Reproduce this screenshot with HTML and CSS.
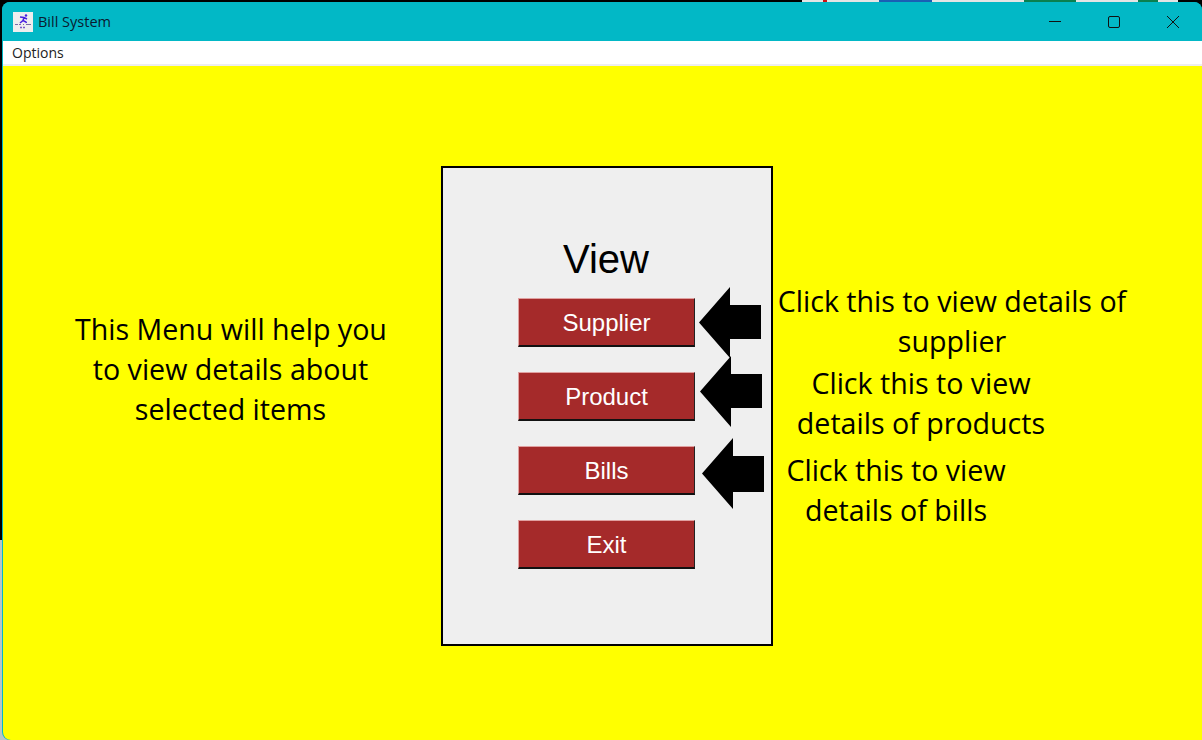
FILE: index.html
```html
<!DOCTYPE html>
<html lang="en">
    <head>
        <meta charset="UTF-8">
        <meta name="viewport" content="width=device-width, initial-scale=1.0">
        <title>Bill System</title>
        <link rel="stylesheet" href="styles.css">
    </head>
    <body>
        <div class="behind">
            <span class="behind-light w21"></span>
            <span class="behind-red w4"></span>
            <span class="behind-light w52"></span>
            <span class="behind-blue w53"></span>
            <span class="behind-light w92"></span>
            <span class="behind-green w52"></span>
            <span class="behind-light w62"></span>
            <span class="behind-green w20"></span>
            <span class="behind-light w20"></span>
        </div>
        <div class="window">
            <div class="titlebar">
                <svg class="app-icon" width="20" height="20" viewBox="0 0 20 20">
                    <rect width="20" height="20" fill="#eeeeee"/>
                    <circle cx="13" cy="3.5" r="1.2" fill="#4a20e0"/>
                    <path d="M7 5l4 .5 3 1.5M11 5.500l-1 3-3 2.500M10 8.500l3 1.500 .5 1" stroke="#4a20e0" stroke-width="1.500" fill="none"/>
                    <path d="M2 12.500h3M6 12.500h2M10 12.500h1M13 12.500h5" stroke="#7a6aa8" fill="none"/>
                    <path d="M7 15.500h6" stroke="#7a5ac8" stroke-width="1.500" stroke-dasharray="2 1" fill="none"/>
                </svg>
                <span class="app-name">Bill System</span>
                <div class="controls">
                    <button class="control">
                        <svg width="12" height="12" viewBox="0 0 12 12"><path d="M0 5.5h12" stroke="#111" fill="none"/></svg>
                    </button>
                    <button class="control">
                        <svg width="12" height="12" viewBox="0 0 12 12"><rect x="0.5" y="0.5" width="11" height="11" rx="1.5" stroke="#111" fill="none"/></svg>
                    </button>
                    <button class="control">
                        <svg width="12" height="12" viewBox="0 0 12 12"><path d="M0 0l12 12M12 0L0 12" stroke="#111" fill="none"/></svg>
                    </button>
                </div>
            </div>
            <div class="menubar"><a href="#">Options</a></div>
            <div class="canvas">
                <p class="note note-left">This Menu will help you<br>to view details about<br>selected items</p>

                <div class="panel">
                    <h2>View</h2>
                    <button class="menu-btn">Supplier</button>
                    <button class="menu-btn">Product</button>
                    <button class="menu-btn">Bills</button>
                    <button class="menu-btn">Exit</button>
                </div>

                <svg class="arrow arrow-supplier" width="62" height="71" viewBox="0 0 62 71"><path d="M31 0L0 35.5 31 71V52h31V18H31z"/></svg>
                <svg class="arrow arrow-product" width="62" height="71" viewBox="0 0 62 71"><path d="M31 0L0 35.5 31 71V52h31V18H31z"/></svg>
                <svg class="arrow arrow-bills" width="62" height="71" viewBox="0 0 62 71"><path d="M31 0L0 35.5 31 71V54h31V18H31z"/></svg>

                <p class="note note-supplier">Click this to view details of<br>supplier</p>
                <p class="note note-product">Click this to view<br>details of products</p>
                <p class="note note-bills">Click this to view<br>details of bills</p>
            </div>
        </div>
    </body>
</html>
```

FILE: styles.css
```css
* {
    box-sizing: border-box;
}

html, body {
    height: 100%;
}

body {
    margin: 0;
    overflow: hidden;
    background: linear-gradient(#000 540px, #b9c4c8 540px);
    font-family: "Open Sans", "Noto Sans", sans-serif;
}

.behind {
    display: flex;
    height: 2px;
    padding-left: 802px;
}

.w4 { width: 4px; }
.w20 { width: 20px; }
.w21 { width: 21px; }
.w52 { width: 52px; }
.w53 { width: 53px; }
.w62 { width: 62px; }
.w92 { width: 92px; }

.behind-light { background-color: #e4e4e4; }
.behind-red { background-color: #d01010; }
.behind-blue { background-color: #1a5fb4; }
.behind-green { background-color: #0a8050; }

.window {
    height: 738px;
    margin-left: 2px;
    display: flex;
    flex-direction: column;
    border-radius: 8px 8px 0 8px;
    overflow: hidden;
    background-color: #02b8c6;
}

.titlebar {
    height: 39px;
    flex: none;
    display: flex;
    align-items: center;
    padding-left: 11px;
    background-color: #02b8c6;
}

.app-icon {
    margin-right: 5px;
}

.app-name {
    font-size: 14.5px;
    color: #0a1a30;
}

.controls {
    margin-left: auto;
    display: flex;
}

.control {
    width: 59px;
    height: 39px;
    padding: 0;
    border: none;
    background: none;
    display: flex;
    align-items: center;
    justify-content: center;
}

.menubar {
    height: 25px;
    flex: none;
    margin-left: 1px;
    padding: 3px 0 0 9px;
    background-color: #fff;
    border-bottom: 2px solid #eeeeee;
    font-size: 14px;
    line-height: 17px;
}

.menubar a {
    color: #222;
    text-decoration: none;
}

.canvas {
    position: relative;
    flex: 1;
    margin-left: 1px;
    padding-top: 100px;
    padding-left: 438px;
    background-color: #ffff00;
    border-bottom-left-radius: 8px;
}

.panel {
    width: 332px;
    height: 480px;
    display: flex;
    flex-direction: column;
    align-items: center;
    background-color: #efefef;
    border: 2px solid #000;
}

.panel h2 {
    margin: 69px 2px 17px 0;
    height: 44px;
    font-family: "Liberation Sans", Arial, sans-serif;
    font-size: 40px;
    font-weight: normal;
    line-height: 44px;
    color: #000;
}

.menu-btn {
    width: 177px;
    height: 49px;
    flex: none;
    margin: 0 1px 25px 0;
    padding: 1px 0 0;
    background-color: #a52a2a;
    border: 1px solid;
    border-color: #e0a0a0 #222 #111 #e0a0a0;
    border-bottom-width: 2px;
    font-family: "Liberation Sans", Arial, sans-serif;
    font-size: 24px;
    color: #fff;
}

.note {
    position: absolute;
    margin: 0;
    font-size: 28.6px;
    line-height: 40px;
    text-align: center;
    color: #000;
    white-space: nowrap;
}

.note-left { left: 72px; top: 243px; width: 311px; }
.note-supplier { left: 774px; top: 215px; width: 350px; }
.note-product { left: 793px; top: 297px; width: 250px; }
.note-bills { left: 782px; top: 384px; width: 222px; }

.arrow {
    position: absolute;
    fill: #000;
}

.arrow-supplier { left: 696px; top: 221px; }
.arrow-product { left: 697px; top: 290px; }
.arrow-bills { left: 699px; top: 372px; }
```
